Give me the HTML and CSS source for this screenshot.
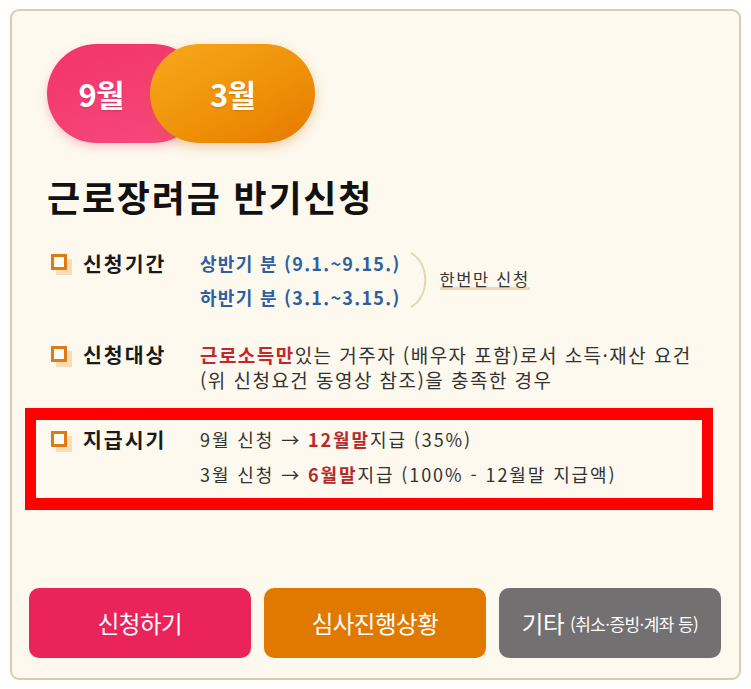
FILE: index.html
```html
<!DOCTYPE html>
<html lang="ko">
<head>
<meta charset="utf-8">
<title>근로장려금 반기신청</title>
<link rel="stylesheet" href="styles.css">
</head>
<body>
<div class="card">
  <div class="pill">
    <div class="pill-left">9월</div>
    <div class="pill-right">3월</div>
  </div>
  <h1 class="title">근로장려금 반기신청</h1>

  <div class="row row-period">
    <span class="bullet"></span>
    <span class="label">신청기간</span>
    <div class="value period">
      <div class="half-list">
        <div class="half">상반기 분 (9.1.~9.15.)</div>
        <div class="half">하반기 분 (3.1.~3.15.)</div>
      </div>
      <svg class="brace" width="20" height="58" viewBox="0 0 20 58"><path d="M3 2 C 22 12, 22 46, 3 56" fill="none" stroke="#e6d6b6" stroke-width="2"/></svg>
      <span class="once">한번만 신청</span>
    </div>
  </div>

  <div class="row row-target">
    <span class="bullet"></span>
    <span class="label">신청대상</span>
    <div class="value target"><span class="hl">근로소득만</span>있는 거주자 (배우자 포함)로서 소득·재산 요건<br>(위 신청요건 동영상 참조)을 충족한 경우</div>
  </div>

  <div class="redbox">
    <div class="row row-pay">
      <span class="bullet"></span>
      <span class="label">지급시기</span>
      <div class="value pay">
        <div>9월 신청 → <b class="dr">12월말</b>지급 (35%)</div>
        <div>3월 신청 → <b class="dr">6월말</b>지급 (100% - 12월말 지급액)</div>
      </div>
    </div>
  </div>

  <div class="buttons">
    <a class="btn btn-apply">신청하기</a>
    <a class="btn btn-status">심사진행상황</a>
    <a class="btn btn-etc">기타 <small>(취소·증빙·계좌 등)</small></a>
  </div>
</div>
</body>
</html>
```

FILE: styles.css
```css
* { box-sizing: border-box; }
html, body { margin: 0; padding: 0; background: #ffffff; }
body {
  font-family: "Noto Sans CJK KR", "Noto Sans", sans-serif;
  color: #333333;
  padding: 9px 10px 0 10px;
}
.card {
  width: 731px;
  height: 671px;
  border: 2px solid #decbaa;
  border-radius: 9px;
  background: #fdf9ee;
  padding: 33px 35px 20px 35px;
}
.pill {
  display: flex;
  height: 99px;
}
.pill-left, .pill-right {
  height: 99px;
  border-radius: 50px;
  color: #ffffff;
  font-weight: 700;
  font-size: 31px;
  display: flex;
  align-items: center;
  justify-content: center;
  letter-spacing: -1px;
  text-shadow: 0 1px 2px rgba(0,0,0,0.15);
}
.pill-left {
  width: 156px;
  padding-right: 48px;
  background: linear-gradient(160deg, #f2336a 0%, #f74a7c 100%);
  box-shadow: 0 4px 10px rgba(240, 60, 110, 0.25);
}
.pill-right {
  width: 165px;
  margin-left: -53px;
  background: linear-gradient(150deg, #f8a71d 0%, #ef9208 55%, #e57a00 100%);
  box-shadow: 0 4px 12px rgba(200, 110, 20, 0.3);
}
.title {
  margin: 31px 0 0 0;
  font-size: 36px;
  line-height: 44px;
  font-weight: 700;
  color: #111111;
  letter-spacing: 1.8px;
}
.row {
  display: grid;
  grid-template-columns: 36px 117px 1fr;
  align-items: start;
}
.bullet {
  display: block;
  width: 16px;
  height: 16px;
  margin-left: 4px;
  border: 3px solid #e07a14;
  background: #fffdf8;
  box-shadow: 5px 5px 0 0 #f9dcb6;
}
.label {
  font-size: 20.5px;
  font-weight: 700;
  color: #1a1a1a;
  letter-spacing: 2px;
}
.row-period { margin-top: 28px; }
.row-period .bullet { margin-top: 8px; }
.row-period .label { line-height: 34px; }
.period {
  display: flex;
  align-items: center;
}
.half {
  font-size: 18px;
  line-height: 34px;
  font-weight: 700;
  color: #2f5f9f;
  letter-spacing: 1.3px;
}
.brace { margin-left: 7px; }
.once {
  margin-left: 12px;
  font-size: 16.5px;
  line-height: 20px;
  color: #333333;
  background: linear-gradient(to top, transparent 0, transparent 1px, #f1d8b0 1px, #f1d8b0 4px, transparent 4px);
  padding-bottom: 2px;
  letter-spacing: 1.6px;
}
.row-target { margin-top: 28px; }
.row-target .bullet { margin-top: 4px; }
.row-target .label { line-height: 25px; }
.target {
  font-size: 19px;
  line-height: 25px;
  color: #333333;
  letter-spacing: 1.45px;
  white-space: nowrap;
}
.hl { color: #c3262d; font-weight: 700; }
.redbox {
  margin-top: 16px;
  margin-left: -22px;
  width: 688px;
  border: 11px solid #ff0000;
  border-top-width: 12px;
  border-bottom-width: 12px;
  padding: 2px 0 6px 11px;
}
.row-pay .bullet { margin-top: 9px; }
.row-pay .label { line-height: 35px; }
.pay {
  font-size: 18px;
  line-height: 35px;
  color: #333333;
  letter-spacing: 1.9px;
  white-space: nowrap;
}
.dr { color: #b52a2c; font-weight: 700; }
.buttons {
  margin-top: 78px;
  margin-left: -18px;
  width: 692px;
  display: flex;
  gap: 13px;
}
.btn {
  flex: 0 0 222px;
  height: 70px;
  border-radius: 10px;
  display: flex;
  align-items: center;
  justify-content: center;
  color: #ffffff;
  font-size: 23.5px;
  letter-spacing: -0.5px;
  text-decoration: none;
}
.btn small { font-size: 17px; margin-left: 6px; letter-spacing: -0.6px; }
.btn-apply { background: #ea2459; }
.btn-status { background: #e17800; }
.btn-etc { background: #727070; }
```
